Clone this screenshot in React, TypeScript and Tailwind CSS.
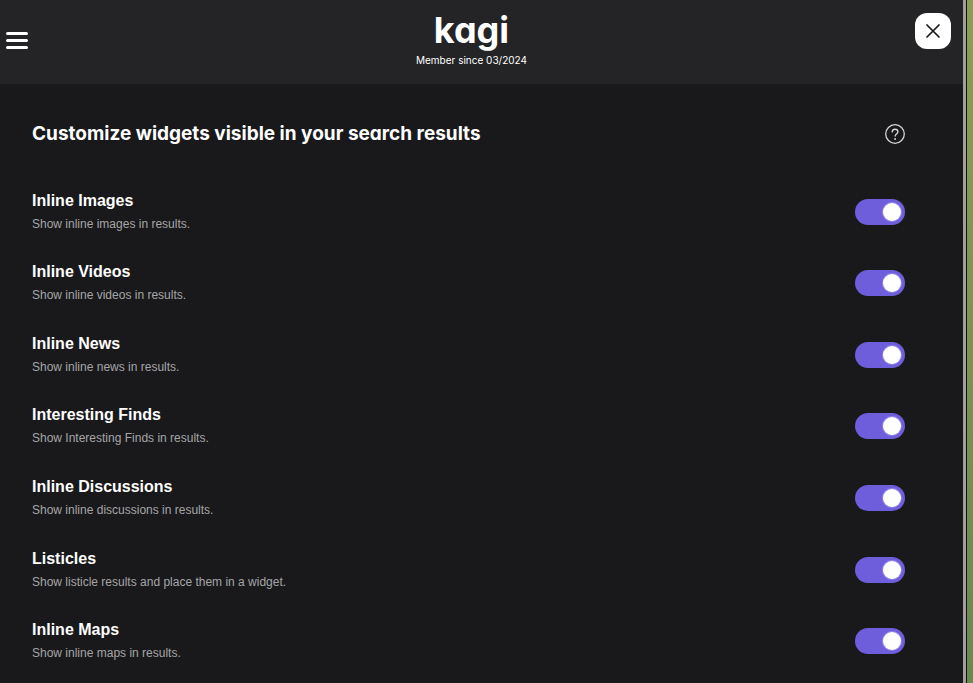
import { useState } from 'react';

const widgets = [
  { id: 'images', title: 'Inline Images', text: 'Show inline images in results.' },
  { id: 'videos', title: 'Inline Videos', text: 'Show inline videos in results.' },
  { id: 'news', title: 'Inline News', text: 'Show inline news in results.' },
  { id: 'finds', title: 'Interesting Finds', text: 'Show Interesting Finds in results.' },
  { id: 'discussions', title: 'Inline Discussions', text: 'Show inline discussions in results.' },
  { id: 'listicles', title: 'Listicles', text: 'Show listicle results and place them in a widget.' },
  { id: 'maps', title: 'Inline Maps', text: 'Show inline maps in results.' },
];

const Header = () => {
  return (
    <header className="grid h-[84px] grid-cols-[1fr_auto_1fr] bg-[#242426] pl-1.5 pr-[26px] font-['Inter',sans-serif] [font-feature-settings:'cv11']">
      <button type="button" aria-label="Menu" className="flex w-[22px] flex-col justify-center gap-1 self-center pb-1">
        <span className="h-[3px] w-full rounded-full bg-white" />
        <span className="h-[3px] w-full rounded-full bg-white" />
        <span className="h-[3px] w-full rounded-full bg-white" />
      </button>
      <div className="flex flex-col items-center pt-2 text-white">
        <a href="#" className="text-4xl leading-[44px] font-bold">kagi</a>
        <p className="text-[10px] leading-4">Member since 03/2024</p>
      </div>
    </header>
  );
};

const WidgetRow = ({ id, title, text }: { id: string; title: string; text: string }) => {
  const [on, setOn] = useState(true);
  return (
    <li className="flex items-center justify-between">
      <label htmlFor={id} className="pb-0.5">
        <span className="block text-base leading-6 font-bold text-white">{title}</span>
        <span className="block pt-0.5 text-xs leading-[18px] text-[#a5a5a7]">{text}</span>
      </label>
      <input
        id={id}
        type="checkbox"
        checked={on}
        onChange={() => setOn(!on)}
        className="flex h-[26px] w-[50px] appearance-none items-center rounded-full bg-[#4b4b50] px-1 before:h-[18px] before:w-[18px] before:rounded-full before:bg-white before:ring-1 before:ring-[#9589e6] checked:justify-end checked:bg-[#6f5edc]"
      />
    </li>
  );
};

export default function App() {
  return (
    <div className="flex min-h-screen bg-[#19191b] font-['Liberation_Sans',Arial,sans-serif]">
      <div className="relative flex flex-1 flex-col">
        <Header />
        <button
          type="button"
          aria-label="Close"
          className="absolute top-[13px] right-3 flex h-9 w-9 items-center justify-center rounded-xl bg-white"
        >
          <svg width="14" height="14" viewBox="0 0 14 14" stroke="#19191b" strokeWidth="1.7" strokeLinecap="round">
            <path d="M1 1l12 12M13 1L1 13" />
          </svg>
        </button>
        <main className="flex flex-1 flex-col pt-8 pr-[58px] pb-1.5 pl-8">
          <div className="flex items-center justify-between pb-6">
            <h1 className="font-['Inter',sans-serif] text-[19px] leading-9 font-bold text-white [font-feature-settings:'cv11']">
              Customize widgets visible in your search results
            </h1>
            <button type="button" aria-label="Help">
              <svg width="20" height="20" viewBox="0 0 20 20" fill="none" stroke="#d4d4d6" strokeLinecap="round">
                <circle cx="10" cy="10" r="9.3" strokeWidth="1.3" />
                <path d="M7.2 7.9C7.3 6.2 8.4 5.2 10 5.2s2.9 1 2.9 2.6c0 2.1-2.7 2.2-2.7 4.3" strokeWidth="1.4" />
                <circle cx="10.1" cy="15" r="0.95" fill="#d4d4d6" stroke="none" />
              </svg>
            </button>
          </div>
          <ul className="grid flex-1 auto-rows-fr">
            {widgets.map((w) => (
              <WidgetRow key={w.id} {...w} />
            ))}
          </ul>
        </main>
      </div>
      <div className="w-[3px] bg-[#a19f9e]" />
      <div className="w-px bg-[#111112]" />
      <div className="w-1.5 bg-linear-to-b from-[#8a9f50] to-[#6b8850]" />
    </div>
  );
}
